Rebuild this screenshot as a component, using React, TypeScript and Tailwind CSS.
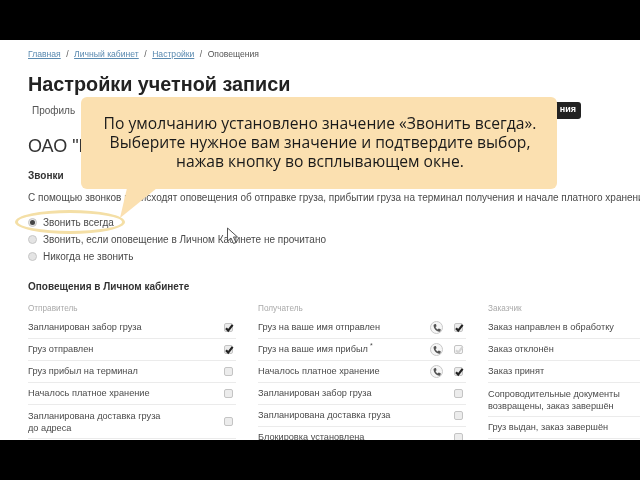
const sender: [string, boolean][] = [
  ["Запланирован забор груза", true],
  ["Груз отправлен", true],
  ["Груз прибыл на терминал", false],
  ["Началось платное хранение", false],
];
const receiver: [string, boolean, boolean, boolean][] = [
  ["Груз на ваше имя отправлен", true, true, false],
  ["Груз на ваше имя прибыл", true, true, true],
  ["Началось платное хранение", true, true, false],
  ["Запланирован забор груза", false, false, false],
  ["Запланирована доставка груза", false, false, false],
  ["Блокировка установлена", false, false, false],
];
const customer = ["Заказ направлен в обработку", "Заказ отклонён", "Заказ принят"];

function Check({ on, dim }: { on: boolean; dim?: boolean }) {
  return (
    <span className={`flex h-[9px] w-[9px] shrink-0 items-center justify-center rounded-[2px] border border-[#c4c4c4] ${dim ? "bg-[#f8f8f8]" : "bg-[#ececec]"}`}>
      {on && (
        <svg viewBox="0 0 10 10" className="h-[10px] w-[10px] shrink-0">
          <path d="M2 5.2 4.2 7.6 8.6 1.8" fill="none" stroke={dim ? "#d4d4d4" : "#222"} strokeWidth="2.2" />
        </svg>
      )}
    </span>
  );
}

function Phone() {
  return (
    <span className="flex h-[13px] w-[13px] shrink-0 items-center justify-center rounded-full border-[1.5px] border-[#c8c8c8] bg-[#f6f6f6]">
      <svg viewBox="0 0 24 24" className="h-[10px] w-[10px]">
        <path d="M6 3 9.5 2.5 11 8 8.5 9.5c.8 2.6 2.7 4.7 5.2 6L16 13l5 2-.6 4c-.3 1.2-1.6 2-3 1.8C10 20 4.5 13.5 3.8 6.4 3.7 4.8 4.6 3.4 6 3Z" fill="#555" />
      </svg>
    </span>
  );
}

function Radio({ on, label }: { on?: boolean; label: string }) {
  return (
    <div className="flex h-[17px] items-center gap-[6px]">
      <span className="flex h-[9px] w-[9px] items-center justify-center rounded-full border border-[#c6c6c6] bg-[#e4e4e4]">
        {on && <span className="h-[5px] w-[5px] rounded-full bg-[#444]" />}
      </span>
      <span>{label}</span>
    </div>
  );
}

function Row({ children, tall }: { children: React.ReactNode; tall?: boolean }) {
  return (
    <div className={`flex items-center border-b border-[#ebebeb] pr-[3px] text-[9.2px] ${tall ? "h-[34px]" : "h-[22px]"}`}>
      {children}
    </div>
  );
}

export default function App() {
  return (
    <div className="flex h-[480px] w-[640px] flex-col overflow-hidden bg-black font-['Liberation_Sans',sans-serif]">
      <div className="h-10 shrink-0 bg-black" />
      <div className="relative flex-1 overflow-hidden bg-white">
        <div className="w-[800px] pl-7 text-[10px] text-[#4a4a4a] blur-[0.5px]">
          <div className="flex h-[21px] items-end gap-[5.5px] text-[8.6px] text-[#555]">
            <span className="text-[#5a8ab0] underline">Главная</span>
            <span>/</span>
            <span className="text-[#5a8ab0] underline">Личный кабинет</span>
            <span>/</span>
            <span className="text-[#5a8ab0] underline">Настройки</span>
            <span>/</span>
            <span>Оповещения</span>
          </div>
          <h1 className="mt-[10px] text-[19.8px] leading-[26px] font-bold text-[#222]">Настройки учетной записи</h1>
          <div className="mt-[2px] flex h-[22px] w-[553px] items-center justify-between pl-1 text-[10px]">
            <span className="text-[#555]">Профиль</span>
            <span className="flex h-[17px] w-[70px] items-center justify-end rounded-[3px] bg-[#222] pr-[5px] text-[9px] font-bold text-white">ния</span>
          </div>
          <div className="mt-[13px] text-[18px] leading-[24px] text-[#333]">ОАО "М</div>
          <div className="mt-[11px] text-[10px] leading-[14px] font-bold text-[#333]">Звонки</div>
          <div className="mt-[8px] leading-[14px] whitespace-nowrap">
            С помощью звонков происходят оповещения об отправке груза, прибытии груза на терминал получения и начале платного хранения
          </div>
          <div className="mt-[9px] flex flex-col">
            <Radio on label="Звонить всегда" />
            <Radio label="Звонить, если оповещение в Личном Кабинете не прочитано" />
            <Radio label="Никогда не звонить" />
          </div>
          <div className="mt-[15px] text-[10px] leading-[14px] font-bold text-[#333]">Оповещения в Личном кабинете</div>
          <div className="mt-[8px] flex gap-[22px]">
            <div className="w-[208px] shrink-0">
              <div className="mb-[2px] h-[13px] text-[8.2px] leading-[13px] text-[#aaa]">Отправитель</div>
              {sender.map(([t, on]) => (
                <Row key={t}>
                  <span className="flex-1">{t}</span>
                  <Check on={on} />
                </Row>
              ))}
              <Row tall>
                <span className="flex-1 leading-[12px]">Запланирована доставка груза<br />до адреса</span>
                <Check on={false} />
              </Row>
            </div>
            <div className="w-[208px] shrink-0">
              <div className="mb-[2px] h-[13px] text-[8.2px] leading-[13px] text-[#aaa]">Получатель</div>
              {receiver.map(([t, phone, on, dim]) => (
                <Row key={t}>
                  <span className="flex-1">
                    {t}
                    {dim && <sup className="ml-[2px] text-[7px]">*</sup>}
                  </span>
                  {phone && <span className="mr-[11px]"><Phone /></span>}
                  <Check on={on} dim={dim} />
                </Row>
              ))}
            </div>
            <div className="w-[200px] shrink-0">
              <div className="mb-[2px] h-[13px] text-[8.2px] leading-[13px] text-[#aaa]">Заказчик</div>
              {customer.map((t) => (
                <Row key={t}>
                  <span>{t}</span>
                </Row>
              ))}
              <Row tall>
                <span className="leading-[12px]">Сопроводительные документы<br />возвращены, заказ завершён</span>
              </Row>
              <Row>
                <span>Груз выдан, заказ завершён</span>
              </Row>
            </div>
          </div>
        </div>

        {/* highlight ellipse */}
        <div className="absolute top-[170px] left-[15px] h-[24px] w-[110px] rounded-[50%] border-[3px] border-[#f4dfa6] blur-[0.3px]" />

        {/* callout tail */}
        <svg className="absolute top-[148px] left-[100px] h-[40px] w-[70px]" viewBox="0 0 70 40">
          <path d="M27 0 L20 30 L57 0 Z" fill="#fbe0b0" />
        </svg>

        {/* callout */}
        <div className="absolute top-[57px] left-[81px] flex h-[92px] w-[476px] items-center justify-center rounded-[6px] bg-[#fbe0b0] pb-[1px] pl-[2px] text-center font-['Open_Sans',sans-serif] text-[15.65px] leading-[19px] text-[#1a1a1a]">
          <p className="blur-[0.3px]">
            По умолчанию установлено значение «Звонить всегда».
            <br />
            Выберите нужное вам значение и подтвердите выбор,
            <br />
            нажав кнопку во всплывающем окне.
          </p>
        </div>

        {/* mouse cursor */}
        <svg className="absolute top-[187px] left-[226px] h-[18px] w-[13px]" viewBox="0 0 13 18">
          <path d="M1.5 1 L1.5 14 L5 11 L7.5 16.5 L10 15.5 L7.5 10 L11.5 10 Z" fill="#fff" stroke="#555" strokeWidth="1" />
        </svg>
      </div>
      <div className="h-10 shrink-0 bg-black" />
    </div>
  );
}
